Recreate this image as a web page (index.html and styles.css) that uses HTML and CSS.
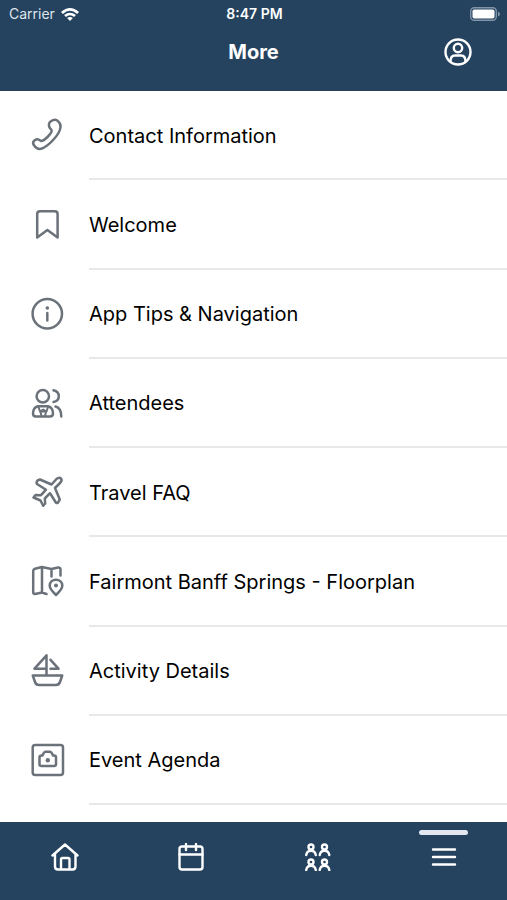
FILE: index.html
```html
<!DOCTYPE html>
<html lang="en">
<head>
<meta charset="utf-8">
<meta name="viewport" content="width=device-width, initial-scale=1">
<title>More</title>
<link rel="stylesheet" href="styles.css">
</head>
<body>
<header class="top">
  <div class="status">
    <span class="carrier">Carrier
      <svg class="wifi" viewBox="0 0 18 14" aria-hidden="true"><path fill="currentColor" d="M9 14 6.1 11.100Q9 8.700 11.900 11.100ZM4.900 9.900 3.100 8.100Q9 3.200 14.900 8.100L13.100 9.900Q9 6.500 4.900 9.900ZM1.900 6.900 0 5Q9-3 18 5L16.100 6.900Q9 .7 1.900 6.900Z"/></svg>
    </span>
    <span class="time">8:47 PM</span>
    <svg class="battery" viewBox="0 0 30 14" aria-hidden="true"><rect x=".7" y=".7" width="25.600" height="12.600" rx="3.500" fill="none" stroke="#8294a8" stroke-width="1.400"/><rect x="2.500" y="2.500" width="22" height="9" rx="1.800" fill="#fff"/><path fill="#8294a8" d="M28 4.500q2 1 2 2.500t-2 2.500z"/></svg>
  </div>
  <div class="bar">
    <h1>More</h1>
    <button class="profile" type="button" aria-label="Profile">
      <svg viewBox="0 0 28 28" aria-hidden="true"><circle cx="14" cy="14" r="12.500"/><circle cx="14" cy="10" r="4.200"/><path d="M6.500 23.500Q6.500 17.500 11 17.500H17Q21.500 17.500 21.500 23.500"/></svg>
    </button>
  </div>
</header>
<main class="list">
  <a class="row" href="#contact">
    <svg class="icon" viewBox="7 11 40 40" aria-hidden="true"><path d="M30.500 16.500 33 15.200Q36 14 38 16.200 41 19 40.500 22 40 27.500 34 34 27 42 21 43.800 17 44.500 14.500 41 12 38 14 35.800L16 34.500Q17.500 33.800 19 34.800L20.500 35.800Q23 36.500 27.500 32 32.500 27 31.500 25L29.500 22.500Q28 18.500 30.500 16.500Z"/></svg>
    <span class="label">Contact Information</span>
  </a>
  <a class="row" href="#welcome">
    <svg class="icon" viewBox="7 10 40 40" aria-hidden="true"><path d="M17.200 42.500V19Q17.200 16.200 20 16.200H34.800Q37.600 16.200 37.600 19V42.500L27.400 35Z"/></svg>
    <span class="label">Welcome</span>
  </a>
  <a class="row" href="#tips">
    <svg class="icon" viewBox="7 10 40 40" aria-hidden="true"><circle cx="27.300" cy="29.700" r="14.700"/><path d="M27.300 29V36.500"/><circle class="dot" cx="27.300" cy="24" r="1.800"/></svg>
    <span class="label">App Tips &amp; Navigation</span>
  </a>
  <a class="row" href="#attendees">
    <svg class="icon" viewBox="7 10 40 40" aria-hidden="true"><circle cx="22.800" cy="23.200" r="6.200"/><path d="M33.500 17.200Q38.800 18.500 38.800 23.200T33.500 29M35.500 33.500Q41.300 35 41.300 43.500M18 33.200H28Q33 34.500 33 40.500 33 43.500 30 43.500H16Q13 43.500 13 40.500 13 34.500 18 33.200Z"/><path class="fine" d="M18.500 34 20 38.500 23.200 36.500 26.500 38.500 28 34M20 38.500H26.500M20.500 39 21.500 43M26 39 25 43"/></svg>
    <span class="label">Attendees</span>
  </a>
  <a class="row" href="#travel">
    <svg class="icon" viewBox="7 11 40 40" aria-hidden="true"><path d="M31.500 22.500 36.500 17Q39 14.800 41 16.500 42.500 18.500 40 21L35 26 39.800 37.500 37.800 40.800Q36.300 41.300 35.500 40L30 31.200 24.800 36.500 25.200 41.500 23.200 43.800 20.500 38.500 13.500 35.500 15.500 33 21 33.200 26 27.700 17 22Q16 20.500 17.500 18.500L20 17.500Z"/></svg>
    <span class="label">Travel FAQ</span>
  </a>
  <a class="row" href="#floorplan">
    <svg class="icon" viewBox="7 11 40 40" aria-hidden="true"><path d="M26.500 43 22 41.500 15 43Q13.200 43 13.200 41V20Q13.200 18.200 15 17.700L21.800 16 31.500 18 38 16.500Q40.500 16.300 40.500 18.500V24.500M22 16.500V41.500M31.500 18V25.500"/><path d="M36 44Q29.700 38 29.700 34.800C29.700 26.800 42.300 26.800 42.300 34.800Q42.300 38 36 44Z"/><circle class="dot" cx="36" cy="34.600" r="2"/></svg>
    <span class="label">Fairmont Banff Springs - Floorplan</span>
  </a>
  <a class="row" href="#activities">
    <svg class="icon" viewBox="7 11 40 40" aria-hidden="true"><path d="M26.500 35V15.300L14.500 28.700H26.500M30.500 19.800 38.500 28.700H30.500M12.800 35.500H42.200L40 42Q39 45 36 45H19Q16 45 15 42Z"/></svg>
    <span class="label">Activity Details</span>
  </a>
  <a class="row" href="#agenda">
    <svg class="icon" viewBox="7 10 40 40" aria-hidden="true"><rect x="12.700" y="15" width="30.300" height="30" rx="2.500"/><path d="M19.500 34.500V27.500Q19.500 25.500 21.500 25.500H22.500Q24 21.700 25.500 21.700H30Q31.500 21.700 33 25.500H34Q36 25.500 36 27.500V34Q36 36 34 36H21.500Q19.500 36 19.500 34.500Z"/><circle class="dot" cx="27.800" cy="30.200" r="2.200"/></svg>
    <span class="label">Event Agenda</span>
  </a>
</main>
<nav class="tabs" aria-label="Main">
  <a class="tab" href="#home" aria-label="Home"><svg viewBox="0 0 28 28" aria-hidden="true"><path d="M1.500 12.500 14 1.500 26.500 12.500M4 11V23.500Q4 26.500 7 26.500H21.500Q24.500 26.500 24.500 23.500V11M10 26V16.500Q10 15 11.500 15H17Q18.500 15 18.500 16.500V26"/></svg></a>
  <a class="tab" href="#calendar" aria-label="Calendar"><svg viewBox="0 0 28 28" aria-hidden="true"><rect x="2.500" y="3.500" width="23" height="23" rx="2.500"/><path d="M2.500 11.500H25.500M9 1V7M19 1V7"/></svg></a>
  <a class="tab" href="#people" aria-label="People"><svg viewBox="0 0 28 28" aria-hidden="true"><g id="person"><circle cx="7" cy="4" r="2.500"/><path d="M2.200 12Q3 7.800 7 7.800T11.800 12"/></g><use href="#person" x="13.500"/><use href="#person" y="15"/><use href="#person" x="13.500" y="15"/></svg></a>
  <a class="tab active" href="#more" aria-label="More" aria-current="page"><svg viewBox="0 0 28 28" aria-hidden="true"><path d="M3 6.500H25M3 14H25M3 21.500H25"/></svg></a>
</nav>
</body>
</html>
```
FILE: styles.css
```css
* {
  box-sizing: border-box;
}

body {
  margin: 0;
  min-height: 100vh;
  display: flex;
  flex-direction: column;
  background: #fff;
  color: #000;
  font-family: Inter, "Liberation Sans", sans-serif;
}

svg {
  display: block;
}

.top {
  height: 91px;
  background: #25425f;
  color: #fff;
}

.status {
  display: grid;
  grid-template-columns: 1fr auto 1fr;
  align-items: center;
  height: 27px;
  padding: 0 7px 0 9px;
  font-size: 14px;
}

.carrier {
  display: flex;
  align-items: center;
  gap: 6px;
  color: #dfe5ec;
}

.wifi {
  width: 18px;
  height: 14px;
  color: #fff;
}

.time {
  font-weight: 600;
}

.battery {
  width: 30px;
  height: 14px;
  justify-self: end;
}

.bar {
  display: grid;
  grid-template-columns: 1fr auto 1fr;
  align-items: center;
  height: 50px;
  padding: 0 35px;
}

h1 {
  grid-column: 2;
  margin: 0;
  font-size: 20px;
  font-weight: 700;
}

.profile {
  justify-self: end;
  padding: 0;
  border: 0;
  background: none;
  color: #fff;
}

.profile svg,
.tab svg {
  width: 28px;
  height: 28px;
  fill: none;
  stroke: currentColor;
  stroke-width: 2.4;
  stroke-linecap: round;
  stroke-linejoin: round;
}

.list {
  flex: 1;
  display: flex;
  flex-direction: column;
  padding-bottom: 17px;
}

.row {
  flex: 1 0 80px;
  display: flex;
  align-items: center;
  gap: 22px;
  padding-left: 27px;
  color: inherit;
  text-decoration: none;
}

.icon {
  flex: none;
  width: 40px;
  height: 40px;
  fill: none;
  stroke: #6b727a;
  stroke-width: 2.5;
  stroke-linecap: round;
  stroke-linejoin: round;
}

.icon .dot {
  fill: #6b727a;
  stroke: none;
}

.icon .fine {
  stroke-width: 2;
}

.label {
  flex: 1;
  align-self: stretch;
  display: flex;
  align-items: center;
  padding-top: 2px;
  border-bottom: 2px solid #e8e8e9;
  font-size: 20px;
}

.tabs {
  display: grid;
  grid-template-columns: repeat(4, 1fr);
  height: 78px;
  padding-left: 2px;
  background: #25425f;
}

.tab {
  position: relative;
  display: flex;
  justify-content: center;
  padding-top: 21px;
  color: #fff;
}

.active::before {
  content: "";
  position: absolute;
  top: 8px;
  width: 49px;
  height: 5px;
  border-radius: 3px;
  background: #e3e8f0;
}
```
